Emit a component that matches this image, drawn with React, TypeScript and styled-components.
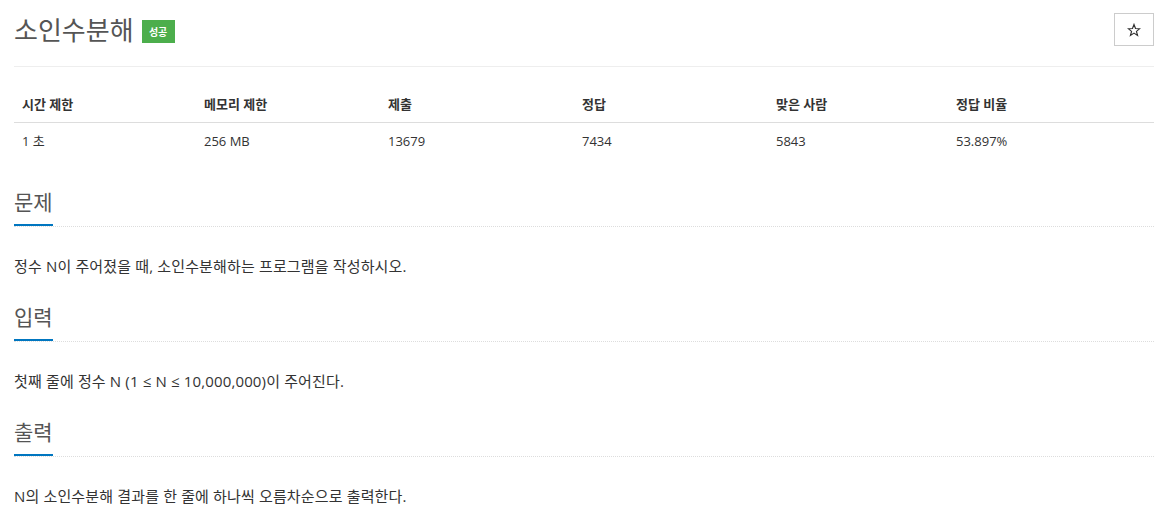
import React from 'react';
import styled, { createGlobalStyle } from 'styled-components';

const GlobalStyle = createGlobalStyle`
  body {
    margin: 0;
    background: #fff;
    font-family: "Open Sans", "Noto Sans CJK KR", sans-serif;
    color: #333;
  }
`;

const Page = styled.div`
  padding: 0 11px 0 14px;
`;

const Header = styled.div`
  display: flex;
  justify-content: space-between;
  align-items: flex-start;
  height: 66px;
  border-bottom: 1px solid #eee;
`;

const Title = styled.h1`
  margin: 0;
  padding-top: 13px;
  display: flex;
  align-items: center;
  gap: 8px;
  font-size: 26px;
  font-weight: 400;
  line-height: 34px;
  color: #555;
`;

const Badge = styled.span`
  display: inline-flex;
  align-items: center;
  justify-content: center;
  width: 33px;
  height: 23px;
  margin-top: 3px;
  background: #4cae4c;
  color: #fff;
  font-size: 10px;
  font-weight: 700;
`;

const StarButton = styled.button`
  margin-top: 13px;
  width: 40px;
  height: 33px;
  padding: 0;
  display: flex;
  align-items: center;
  justify-content: center;
  background: #fff;
  border: 1px solid #ccc;
  color: #333;
`;

const Grid = styled.div`
  display: grid;
  grid-template-columns: 182px 184px 194px 194px 180px 1fr;
  margin-top: 19px;
  font-size: 13px;
`;

const Cell = styled.div<{ $head?: boolean }>`
  padding: 8px;
  line-height: 20px;
  font-weight: ${(p) => (p.$head ? 700 : 400)};
  border-bottom: ${(p) => (p.$head ? '1px solid #ddd' : 'none')};
`;

const Section = styled.section`
  margin-top: 32px;

  & + & {
    margin-top: 28px;
  }
`;

const Headline = styled.div`
  border-bottom: 1px dotted #ddd;
  height: 35px;
`;

const HeadTitle = styled.h2`
  display: inline-block;
  margin: 0;
  font-size: 21px;
  font-weight: 400;
  line-height: 23px;
  color: #555;
  padding-bottom: 10px;
  border-bottom: 2px solid #0076c0;
`;

const Text = styled.p`
  margin: 27px 0 0;
  font-size: 15px;
  line-height: 24px;
  letter-spacing: 0.15px;
  color: #333;
`;

const StarIcon = () => (
  <svg width="14" height="14" viewBox="0 0 24 24" fill="none" stroke="#333" strokeWidth="2" strokeLinejoin="miter">
    <path d="M12 2.5l2.6 6.9 7.2.3-5.6 4.6 1.9 7.1L12 17.3l-6.1 4.1 1.9-7.1-5.6-4.6 7.2-.3z" />
  </svg>
);

const stats = [
  ['시간 제한', '1 초'],
  ['메모리 제한', '256 MB'],
  ['제출', '13679'],
  ['정답', '7434'],
  ['맞은 사람', '5843'],
  ['정답 비율', '53.897%'],
];

const sections = [
  ['문제', '정수 N이 주어졌을 때, 소인수분해하는 프로그램을 작성하시오.'],
  ['입력', '첫째 줄에 정수 N (1 ≤ N ≤ 10,000,000)이 주어진다.'],
  ['출력', 'N의 소인수분해 결과를 한 줄에 하나씩 오름차순으로 출력한다.'],
];

const App = () => {
  return (
    <Page>
      <GlobalStyle />
      <Header>
        <Title>
          소인수분해 <Badge>성공</Badge>
        </Title>
        <StarButton>
          <StarIcon />
        </StarButton>
      </Header>
      <Grid>
        {stats.map(([h]) => (
          <Cell $head key={h}>{h}</Cell>
        ))}
        {stats.map(([h, v]) => (
          <Cell key={h + v}>{v}</Cell>
        ))}
      </Grid>
      {sections.map(([h, t]) => (
        <Section key={h}>
          <Headline>
            <HeadTitle>{h}</HeadTitle>
          </Headline>
          <Text>{t}</Text>
        </Section>
      ))}
    </Page>
  );
};

export default App;
